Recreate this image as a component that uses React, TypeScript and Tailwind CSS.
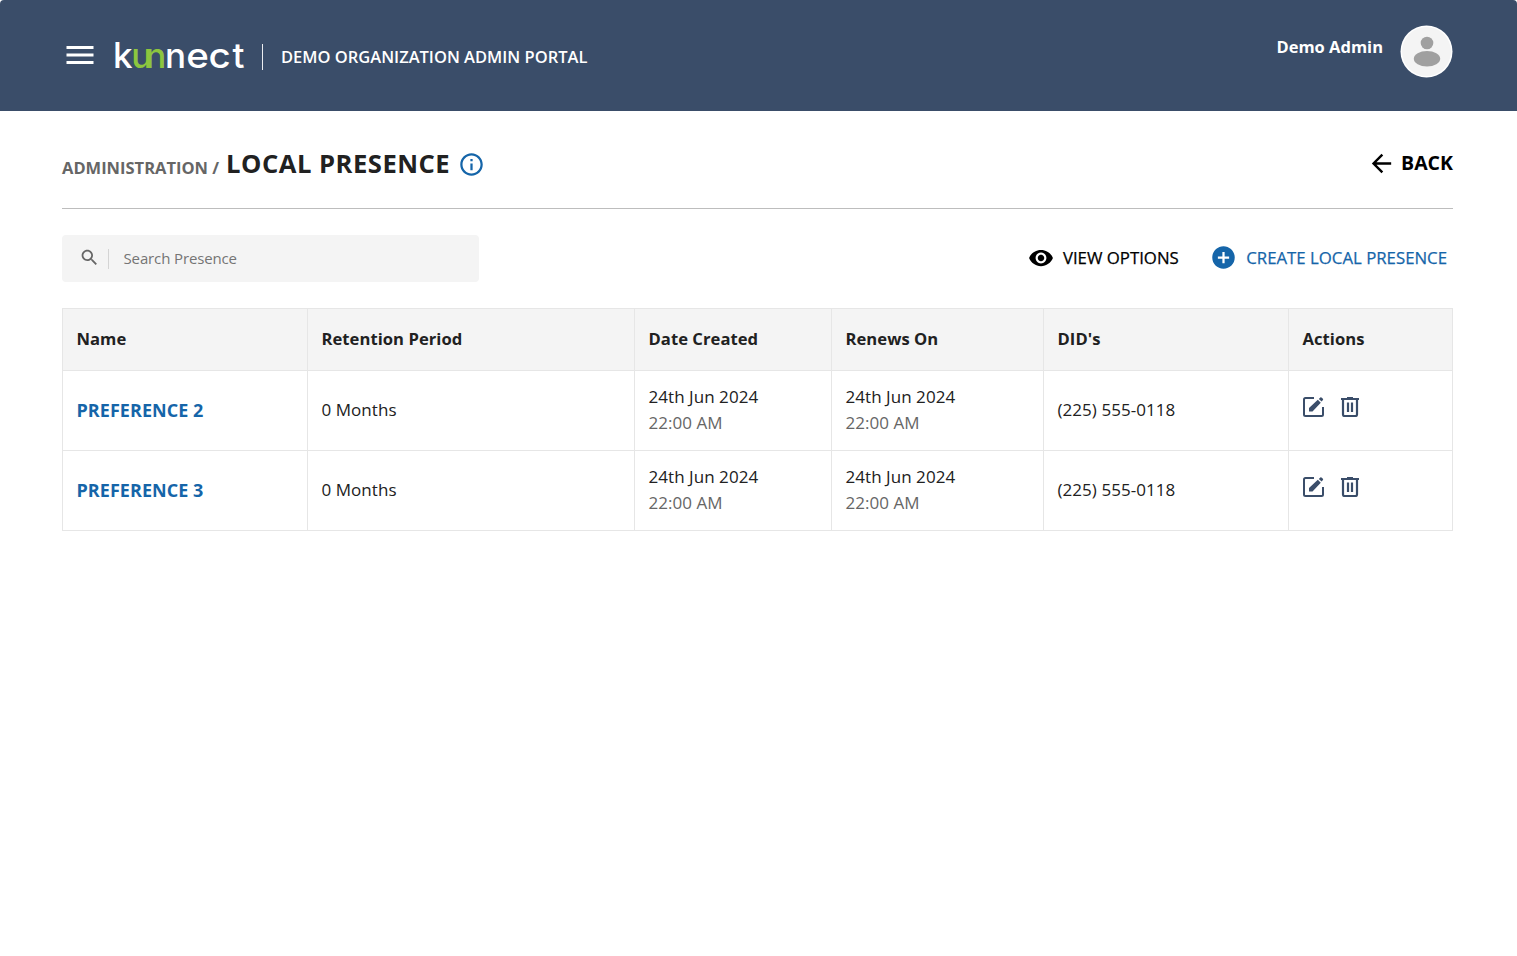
import React from "react";

const Icon = ({ d, className }: { d: string; className: string }) => (
  <svg viewBox="0 0 24 24" fill="currentColor" className={className}>
    <path d={d} />
  </svg>
);

const MENU = "M3 18h18v-2H3v2zm0-5h18v-2H3v2zm0-7v2h18V6H3z";
const INFO =
  "M11 7h2v2h-2zm0 4h2v6h-2zm1-9C6.48 2 2 6.48 2 12s4.48 10 10 10 10-4.48 10-10S17.52 2 12 2zm0 18c-4.41 0-8-3.59-8-8s3.59-8 8-8 8 3.59 8 8-3.59 8-8 8z";
const BACK = "M20 11H7.83l5.59-5.59L12 4l-8 8 8 8 1.41-1.41L7.83 13H20v-2z";
const SEARCH =
  "M15.5 14h-.79l-.28-.27C15.41 12.59 16 11.11 16 9.5 16 5.91 13.09 3 9.5 3S3 5.91 3 9.5 5.91 16 9.5 16c1.61 0 3.09-.59 4.23-1.57l.27.28v.79l5 4.99L20.49 19l-4.99-5zm-6 0C7.01 14 5 11.99 5 9.5S7.01 5 9.5 5 14 7.01 14 9.5 11.99 14 9.5 14z";
const EYE =
  "M12 4.5C7 4.5 2.73 7.61 1 12c1.73 4.39 6 7.5 11 7.5s9.27-3.11 11-7.5c-1.73-4.39-6-7.5-11-7.5zM12 17c-2.76 0-5-2.24-5-5s2.24-5 5-5 5 2.24 5 5-2.24 5-5 5zm0-8c-1.66 0-3 1.34-3 3s1.34 3 3 3 3-1.34 3-3-1.34-3-3-3z";
const PLUS =
  "M12 2C6.48 2 2 6.48 2 12s4.48 10 10 10 10-4.48 10-10S17.52 2 12 2zm5 11h-4v4h-2v-4H7v-2h4V7h2v4h4v2z";

const Logo = () => (
  <svg
    width="132"
    height="44"
    viewBox="0 -4 132 44"
    fill="#fff"
    fontFamily="Inter, sans-serif"
    fontSize="35"
    fontWeight="500"
    className="block overflow-visible"
  >
    <text x="-2" y="30">k</text>
    <text y="30" fill="#8cc63f">
      <tspan x="16.2 30.2">un</tspan>
    </text>
    <text x="50" y="30">n</text>
    <text transform="translate(71.300 30) scale(1.1 1)">e</text>
    <text transform="translate(93.500 30) scale(1.1 1)">c</text>
    <text x="117.500" y="30">t</text>
  </svg>
);

const EditIcon = () => (
  <svg width="22" height="20" viewBox="0 0 22 20" className="block text-[#3a4d69]" fill="none" stroke="currentColor" strokeWidth="2">
    <path d="M11 1H2.5Q1 1 1 2.5v15Q1 19 2.5 19h16Q20 19 20 17.500V10" />
    <path d="M6 14.500v-3.500L14.800 2.800l3 3L9.500 14.500zM15.800 1.900L17.300.5q.6-.5 1.200 0l1.400 1.300q.6.6 0 1.200l-1.300 1.500z" fill="currentColor" stroke="none" />
  </svg>
);

const TrashIcon = () => (
  <svg width="19" height="20" viewBox="0 0 19 20" className="block text-[#3a4d69]" fill="none" stroke="currentColor" strokeWidth="2">
    <path d="M0 2h18M6 1h6M2 2.500v15Q2 19 3.500 19h11Q16 19 16 17.500v-15M7 5.500v9.500M11 5.500v9.500" strokeWidth="2.2" />
  </svg>
);

const cell = "border border-[#e6e6e6] pl-[13.5px]";

const Stamp = () => (
  <div className="leading-[26px]">
    <div>24th Jun 2024</div>
    <div className="text-[#666]">22:00 AM</div>
  </div>
);

const columns = ["Name", "Retention Period", "Date Created", "Renews On", "DID's", "Actions"];

export default function App() {
  return (
    <div className="min-h-[956px] bg-white font-['Open_Sans',sans-serif] text-[#212121]">
      <header className="flex h-[111px] items-start justify-between rounded-t-[4px] bg-[#3a4d69] pl-[61px] pr-16 text-white">
        <div className="flex h-[111px] items-center">
          <Icon d={MENU} className="mb-px ml-[0.5px] size-9" />
          <div className="ml-[17.5px]"><Logo /></div>
          <div className="ml-[15px] h-[26px] w-px translate-y-px bg-white/90" />
          <h1 className="ml-[18px] mt-[3px] whitespace-nowrap text-[16.5px] font-semibold">DEMO ORGANIZATION ADMIN PORTAL</h1>
        </div>
        <div className="flex items-start">
          <span className="mt-[35px] text-[16.5px] font-bold leading-6">Demo Admin</span>
          <svg width="53" height="53" viewBox="0 0 53 53" className="ml-[17px] mt-[25px] block">
            <circle cx="26.500" cy="26.500" r="26" fill="#fff" />
            <circle cx="26.500" cy="26.500" r="24.500" fill="#f4f4f4" />
            <circle cx="27" cy="18" r="6.300" fill="#a0a0a0" />
            <ellipse cx="27" cy="33.700" rx="13.200" ry="7.700" fill="#a0a0a0" />
          </svg>
        </div>
      </header>
      <main className="ml-[62px] w-[1391px]">
        <div className="flex h-[98px] items-start justify-between border-b border-[#bdbdbd]">
          <div className="flex items-start pt-[33px]">
            <span className="mt-[12px] text-[16.5px] font-bold leading-6 text-[#666]">ADMINISTRATION /</span>
            <h2 className="ml-[7px] mt-px text-[25.6px] font-bold leading-[38px] tracking-[0.5px]">LOCAL PRESENCE</h2>
            <Icon d={INFO} className="ml-[8px] mt-[6.5px] size-[27px] text-[#1565a9]" />
          </div>
          <div className="flex items-center pt-[37px] text-[19.5px] font-bold leading-[27px] text-black">
            <Icon d={BACK} className="mr-[5px] mt-px size-[29px]" />
            <span className="mb-px">BACK</span>
          </div>
        </div>
        <div className="mt-[26px] flex h-[47px] items-center justify-between">
          <div className="flex h-[47px] w-[417px] items-center rounded-[4px] bg-[#f4f4f4] pl-[17px]">
            <Icon d={SEARCH} className="mb-[3px] size-[21px] text-[#666]" />
            <div className="ml-[8px] h-5 w-px bg-[#d4d4d4]" />
            <span className="ml-[14.5px] text-[15px] tracking-[-0.13px] text-[#757575]">Search Presence</span>
          </div>
          <div className="flex items-center pr-[6px] text-[16.8px] font-medium">
            <Icon d={EYE} className="mb-px mr-[9px] size-[26px] text-black" />
            <span className="mb-[2px] text-black [-webkit-text-stroke:0.25px_currentColor]">VIEW OPTIONS</span>
            <Icon d={PLUS} className="mb-[2px] ml-[31px] mr-[9.5px] size-[27px] text-[#1565a9]" />
            <span className="mb-[2px] text-[#1565a9] [-webkit-text-stroke:0.25px_currentColor]">CREATE LOCAL PRESENCE</span>
          </div>
        </div>
        <table className="mt-[26px] w-[1391px] table-fixed border-collapse text-left text-[17px] tracking-[0.05px]">
          <colgroup>
            <col className="w-[245px]" />
            <col className="w-[327px]" />
            <col className="w-[197px]" />
            <col className="w-[212px]" />
            <col className="w-[245px]" />
            <col className="w-[164px]" />
          </colgroup>
          <thead>
            <tr className="h-[62px] bg-[#f4f4f4]">
              {columns.map((c) => (
                <th key={c} className={`${cell} text-[16.6px] font-bold`}>{c}</th>
              ))}
            </tr>
          </thead>
          <tbody>
            {["PREFERENCE 2", "PREFERENCE 3"].map((name) => (
              <tr key={name} className="h-[80px]">
                <td className={`${cell} text-[18px] font-bold text-[#1565a9]`}>{name}</td>
                <td className={`${cell} pb-[2px]`}>0 Months</td>
                <td className={`${cell} pb-[2px]`}><Stamp /></td>
                <td className={`${cell} pb-[2px]`}><Stamp /></td>
                <td className={`${cell} pb-[2px]`}>(225) 555-0118</td>
                <td className={cell}>
                  <div className="mb-[7px] flex gap-[16px]"><EditIcon /><TrashIcon /></div>
                </td>
              </tr>
            ))}
          </tbody>
        </table>
      </main>
    </div>
  );
}
